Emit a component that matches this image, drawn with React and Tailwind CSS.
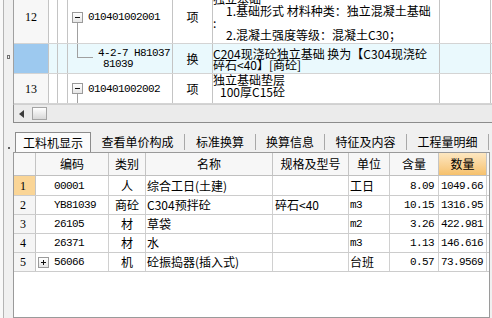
import React from "react";

const mono = "font-['Liberation_Mono',monospace] text-[11px] tracking-[-0.6px]";
const serif = "font-['Liberation_Serif',serif] text-[12px]";
const line = "border-[#c4c4c4]";

function TreeBox({ plus }) {
  return (
    <div className="w-[11px] h-[11px] flex-none border border-[#9a9a9a] bg-gradient-to-b from-white to-[#e6e6e6] flex items-center justify-center">
      <svg width="9" height="9" shapeRendering="crispEdges">
        <path d="M2 4.5H7" stroke="#111" />
        {plus && <path d="M4.5 2V7" stroke="#111" />}
      </svg>
    </div>
  );
}

function TopRow({ h, bg = "bg-white", numBg = "bg-[#f7f7f7]", num, code, type, desc }) {
  return (
    <div className={`flex ${h} ${bg} border-b border-[#d4d4d4]`}>
      <div className={`w-[35px] flex-none border-r ${line} ${numBg} flex items-center justify-center ${serif}`}>{num}</div>
      <div className={`w-[9px] flex-none border-r ${line}`} />
      <div className={`w-[10px] flex-none border-r ${line}`} />
      <div className={`w-[105px] flex-none border-r ${line} flex`}>{code}</div>
      <div className={`w-[40px] flex-none border-r ${line} flex items-center justify-center`}>{type}</div>
      <div className={`w-[227px] flex-none border-r ${line} whitespace-nowrap flex flex-col`}>{desc}</div>
      <div className={`w-[51px] flex-none border-r ${line}`} />
    </div>
  );
}

function ParentCode({ text }) {
  return (
    <div className="flex pl-[4px]">
      <div className="w-[11px] flex flex-col items-center">
        <div className="flex-1" />
        <TreeBox />
        <div className="flex-1 w-px bg-[#a0a0a0]" />
      </div>
      <div className={`self-center ml-[5px] ${mono}`}>{text}</div>
    </div>
  );
}

const cols = [
  { w: "w-[22px]", head: "" },
  { w: "w-[73px]", head: "编码" },
  { w: "w-[37px]", head: "类别" },
  { w: "w-[127px]", head: "名称" },
  { w: "w-[76px]", head: "规格及型号" },
  { w: "w-[41px]", head: "单位" },
  { w: "w-[49px]", head: "含量" },
  { w: "w-[48px]", head: "数量" },
];

const items = [
  { n: "1", code: "00001", type: "人", name: "综合工日(土建)", spec: "", unit: "工日", qty: "8.09", total: "1049.66" },
  { n: "2", code: "YB81039", type: "商砼", name: "C304预拌砼", spec: "碎石<40", unit: "m3", qty: "10.15", total: "1316.95" },
  { n: "3", code: "26105", type: "材", name: "草袋", spec: "", unit: "m2", qty: "3.26", total: "422.981" },
  { n: "4", code: "26371", type: "材", name: "水", spec: "", unit: "m3", qty: "1.13", total: "146.616" },
  { n: "5", code: "56066", type: "机", name: "砼振捣器(插入式)", spec: "", unit: "台班", qty: "0.57", total: "73.9569", plus: true },
];

const tabs = [
  { label: "查看单价构成", w: "w-[94px]" },
  { label: "标准换算", w: "w-[71px]" },
  { label: "换算信息", w: "w-[69px]" },
  { label: "特征及内容", w: "w-[82px]" },
  { label: "工程量明细", w: "w-[82px]" },
];

export default function App() {
  return (
    <div className="w-[492px] h-[318px] overflow-hidden flex bg-[#f0f0f0] text-black font-['Noto_Sans_CJK_SC',sans-serif] text-[12px] leading-[12px]">
      {/* splitter strip */}
      <div className="w-[13px] flex-none flex">
        <div className="w-[3px] bg-[#f8f8f8]" />
        <div className="w-px bg-[#b4b4b4]" />
        <div className="w-[9px] flex flex-col items-center">
          <div className="mt-[55px] w-[3px] h-[4px] border border-[#707070]" />
          <div className="mt-[88px] w-[2px] h-[2px] bg-[#606060]" />
        </div>
      </div>

      <div className="flex-1 min-w-0 flex flex-col">
        {/* top grid */}
        <div className="h-[104px] flex-none overflow-hidden bg-white border-l border-[#a0a0a0]">
          <div className="-mt-[9px]">
            <TopRow
              h="h-[53px]"
              num="12"
              code={<ParentCode text="010401002001" />}
              type="项"
              desc={
                <div className="pt-[2px] leading-[12px]">
                  <div>独立基础</div>
                  <div className="pl-[13px]">1.基础形式 材料种类：独立混凝土基础</div>
                  <div>:</div>
                  <div className="pl-[13px]">2.混凝土强度等级：混凝土C30；</div>
                </div>
              }
            />
            <TopRow
              h="h-[30px]"
              bg="bg-[#eaf9fd]"
              numBg="bg-[#9dc9ef]"
              num=""
              code={
                <div className="flex items-center">
                  <div className="self-start ml-[9px] w-[16px] h-[14px] flex-none border-l border-b border-[#a0a0a0]" />
                  <div className={`ml-[5px] leading-[11px] ${mono}`}>
                    <div>4-2-7 H81037</div>
                    <div className="pl-[5px]">81039</div>
                  </div>
                </div>
              }
              type="换"
              desc={
                <div className="flex-1 flex flex-col justify-center leading-[11px]">
                  <div>C204现浇砼独立基础 换为【C304现浇砼</div>
                  <div>碎石&lt;40】[商砼]</div>
                </div>
              }
            />
            <TopRow
              h="h-[30px]"
              num="13"
              code={<ParentCode text="010401002002" />}
              type="项"
              desc={
                <div className="leading-[12px]">
                  <div>独立基础垫层</div>
                  <div className="pl-[7px]">100厚C15砼</div>
                </div>
              }
            />
          </div>
        </div>

        {/* horizontal scrollbar */}
        <div className="h-[19px] flex-none flex items-center bg-[#ebebeb] border-l border-b border-t border-t-[#d0d0d0] border-[#8c8c8c]">
          <svg className="ml-[5px]" width="5" height="8" viewBox="0 0 5 8">
            <path d="M5 0L0 4L5 8Z" fill="#3c3c3c" />
          </svg>
          <div className="ml-[8px] w-[15px] h-[13px] border border-[#a4a4a4] bg-gradient-to-b from-white to-[#d8d8d8]" />
        </div>

        {/* tab strip */}
        <div className="h-[29px] flex-none flex items-end pl-[2px]">
          <div className="w-[76px] h-[20px] flex-none border-t border-l border-r border-[#8c8c8c] bg-[#fbfbfb] flex items-center justify-center">
            工料机显示
          </div>
          {tabs.map((t) => (
            <div key={t.label} className={`${t.w} h-[20px] flex-none flex items-center`}>
              <div className="flex-1 text-center">{t.label}</div>
              <div className="w-px h-[16px] bg-[#a8a8a8]" />
            </div>
          ))}
        </div>

        {/* bottom grid */}
        <div className="flex-1 min-h-0 mr-[2px] bg-white border border-[#9a9a9a] flex flex-col">
          <div className="flex h-[23px] flex-none border-b border-[#c0c0c0] bg-[#f7f7f7]">
            {cols.map((c, i) => (
              <div
                key={i}
                className={`${c.w} flex-none border-r border-[#c4c4c4] flex items-center justify-center ${
                  i === 7 ? "bg-gradient-to-b from-[#fde7c1] to-[#f6c16c]" : ""
                }`}
              >
                {c.head}
              </div>
            ))}
          </div>
          {items.map((r, i) => (
            <div key={r.n} className={`flex flex-none ${i === 0 ? "h-[20px]" : "h-[19px]"} border-b border-[#cccccc]`}>
              <div className={`w-[22px] flex-none border-r border-[#c4c4c4] flex items-center pl-[6px] ${serif} ${i === 0 ? "bg-[#fad596]" : "bg-[#f5f5f5]"}`}>
                {r.n}
              </div>
              <div className="w-[73px] flex-none border-r border-[#d0d0d0] flex items-center pl-[2px]">
                {r.plus ? <TreeBox plus /> : <div className="w-[11px]" />}
                <span className={`ml-[5px] ${mono}`}>{r.code}</span>
              </div>
              <div className="w-[37px] flex-none border-r border-[#d0d0d0] flex items-center justify-center">{r.type}</div>
              <div className="w-[127px] flex-none border-r border-[#d0d0d0] flex items-center pl-[1px] whitespace-nowrap">{r.name}</div>
              <div className="w-[76px] flex-none border-r border-[#d0d0d0] flex items-center pl-[2px]">{r.spec}</div>
              <div className="w-[41px] flex-none border-r border-[#d0d0d0] flex items-center pl-[1px]">
                {/^[a-z]/.test(r.unit) ? <span className={mono}>{r.unit}</span> : r.unit}
              </div>
              <div className={`w-[49px] flex-none border-r border-[#d0d0d0] flex items-center justify-end pr-[4px] ${mono}`}>{r.qty}</div>
              <div className={`w-[48px] flex-none border-r border-[#d0d0d0] flex items-center justify-end pr-[3px] ${mono}`}>{r.total}</div>
            </div>
          ))}
        </div>
      </div>
    </div>
  );
}
